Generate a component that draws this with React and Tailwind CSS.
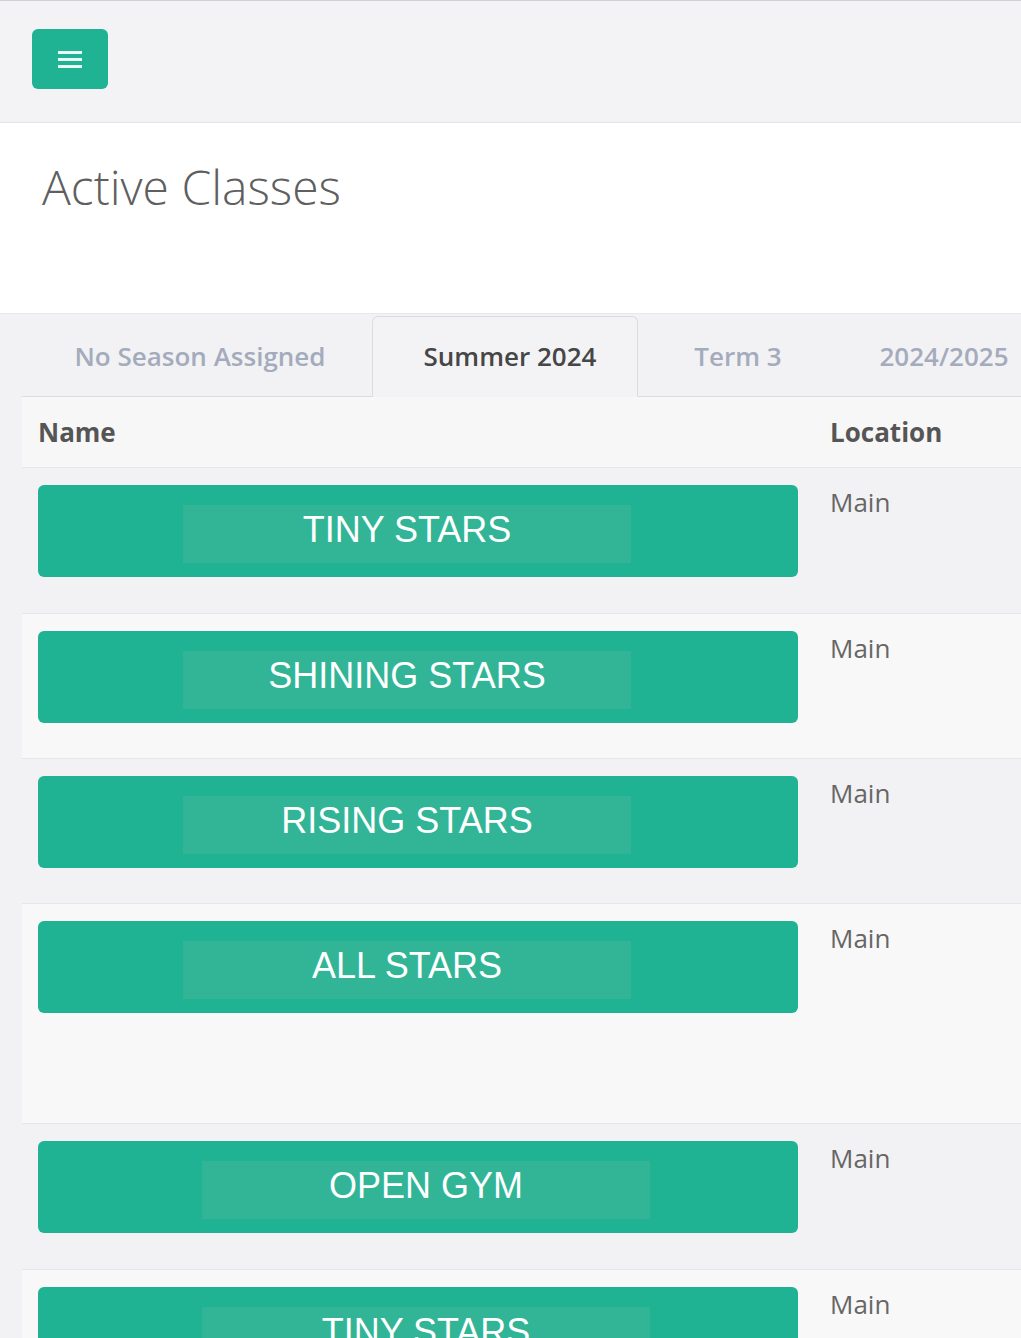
import React from "react";

const tabs = [
  { label: "No Season Assigned", width: "w-[350px] pl-[6px]", active: false },
  { label: "Summer 2024", width: "w-[266px] pl-[10px]", active: true },
  { label: "Term 3", width: "w-[200px]", active: false },
  { label: "2024/2025", width: "w-[212px]", active: false },
];

const classes = [
  { name: "TINY STARS", location: "Main", offset: "ml-[145px]", height: "h-[146px]" },
  { name: "SHINING STARS", location: "Main", offset: "ml-[145px]", height: "h-[145px]" },
  { name: "RISING STARS", location: "Main", offset: "ml-[145px]", height: "h-[145px]" },
  { name: "ALL STARS", location: "Main", offset: "ml-[145px]", height: "h-[220px]" },
  { name: "OPEN GYM", location: "Main", offset: "ml-[164px]", height: "h-[146px]" },
  { name: "TINY STARS", location: "Main", offset: "ml-[164px]", height: "h-[146px]" },
];

function MenuButton() {
  return (
    <button className="w-[76px] h-[60px] rounded-[6px] bg-[#20b393] flex flex-col items-center justify-center gap-[4px]">
      <span className="block w-[24px] h-[3px] bg-[#e8fcf7]"></span>
      <span className="block w-[24px] h-[3px] bg-[#e8fcf7]"></span>
      <span className="block w-[24px] h-[3px] bg-[#e8fcf7]"></span>
    </button>
  );
}

function ClassRow({ item, index }) {
  const odd = index % 2 === 0;
  return (
    <div
      className={`flex border-b border-[#e6e6ea] ${
        odd ? "bg-[#f2f2f4]" : "bg-[#f8f8f9]"
      } ${item.height}`}
    >
      <div className="w-[792px] shrink-0 px-4 pt-[17px]">
        <div className="h-[92px] rounded-[6px] bg-[#20b393] pt-[20px]">
          <span
            className={`block w-[448px] h-[58px] pt-[4px] bg-[#31b596] text-white text-[36px] leading-[41px] text-center ${item.offset}`}
            style={{ fontFamily: '"Liberation Sans", Arial, sans-serif' }}
          >
            {item.name}
          </span>
        </div>
      </div>
      <div className="px-4 pt-[16px] text-[26px] leading-[36px] text-[#666]">
        {item.location}
      </div>
    </div>
  );
}

export default function App() {
  return (
    <div
      className="w-[1021px] h-[1338px] overflow-hidden bg-[#f2f2f4]"
      style={{ fontFamily: '"Open Sans", sans-serif' }}
    >
      <div className="border-t border-[#cfcfd8] border-b border-b-[#e4e4e8] h-[123px] bg-[#f3f3f5] pl-[32px] pt-[28px]">
        <MenuButton />
      </div>

      <div className="bg-white h-[190px] pl-[42px] pt-[40px]">
        <h1 className="text-[48px] leading-[48px] font-light text-[#5f5f5f]">
          Active Classes
        </h1>
      </div>

      <div className="border-t border-[#e8e8ec] pl-[22px]">
        <div className="flex h-[83px] pt-[2px] border-b border-[#dcdce0] whitespace-nowrap">
          {tabs.map((tab) => (
            <div
              key={tab.label}
              className={`${tab.width} shrink-0 flex items-center justify-center text-[26px] font-semibold ${
                tab.active
                  ? "border border-[#dcdce0] border-b-[#f3f3f5] -mb-px rounded-t-[6px] bg-[#f3f3f5] text-[#464646]"
                  : "text-[#a4abbc]"
              }`}
            >
              {tab.label}
            </div>
          ))}
        </div>

        <div className="flex h-[71px] items-center bg-[#f7f7f8] border-b border-[#e6e6ea] text-[26px] font-bold text-[#555]">
          <div className="w-[792px] shrink-0 px-4">Name</div>
          <div className="px-4">Location</div>
        </div>

        {classes.map((item, i) => (
          <ClassRow key={i} item={item} index={i} />
        ))}
      </div>
    </div>
  );
}
